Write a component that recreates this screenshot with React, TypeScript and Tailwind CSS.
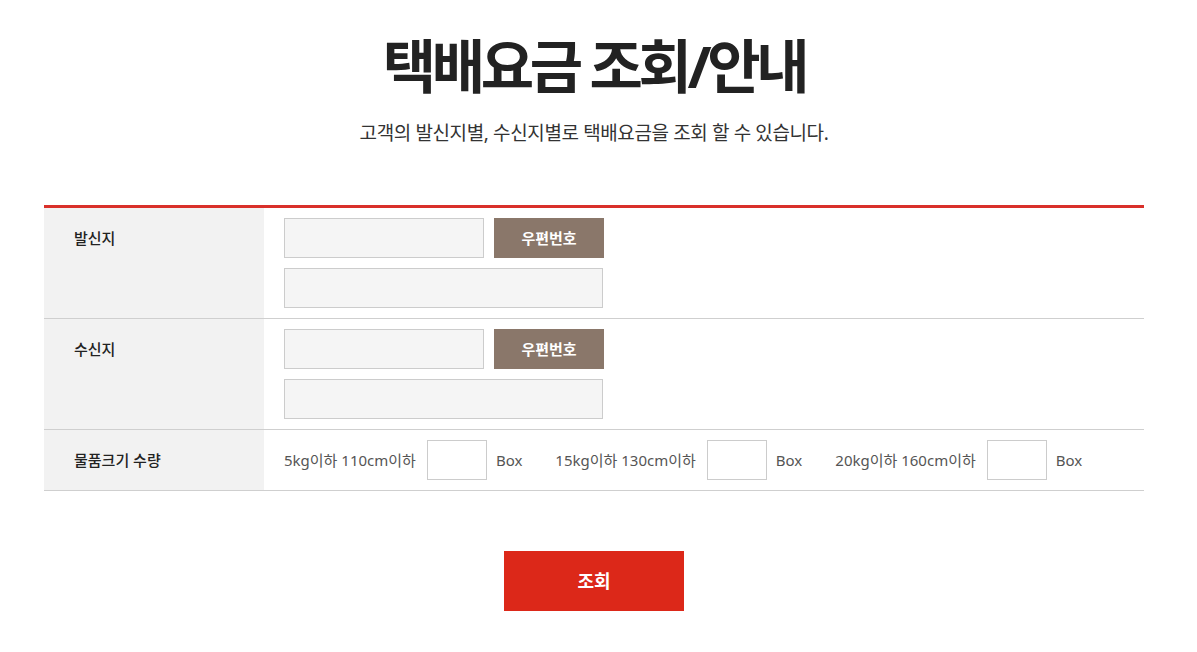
const font = {
  fontFamily: '"Noto Sans", "Noto Sans CJK KR", sans-serif',
}

function AddressRow({ label }: { label: string }) {
  return (
    <div className="flex border-b border-[#cfcfcf]">
      <div className="w-[220px] shrink-0 bg-[#f2f2f2] px-[30px] py-[10px] text-[15px] font-medium leading-[40px] text-[#222]">
        {label}
      </div>
      <div className="flex flex-col gap-[10px] px-[20px] py-[10px]">
        <div className="flex gap-[10px]">
          <input className="h-[40px] w-[200px] border border-[#cccccc] bg-[#f5f5f5] outline-none" />
          <button className="h-[40px] w-[110px] bg-[#8a776a] text-[15px] font-bold text-white">
            우편번호
          </button>
        </div>
        <input className="h-[40px] w-[319px] border border-[#cccccc] bg-[#f5f5f5] outline-none" />
      </div>
    </div>
  )
}

const sizes = ["5kg이하 110cm이하", "15kg이하 130cm이하", "20kg이하 160cm이하"]

export default function App() {
  return (
    <div className="min-h-[652px] bg-white text-[#222]" style={font}>
      <div className="ml-[44px] w-[1100px]">
        <div className="flex flex-col items-center pt-[26px]">
          <h1 className="text-[58px] font-bold leading-[80px] tracking-[-0.075em] text-[#222]">
            택배요금 조회/안내
          </h1>
          <p className="mt-[13px] text-[19px] leading-[28px] tracking-[-0.02em] text-[#333]">
            고객의 발신지별, 수신지별로 택배요금을 조회 할 수 있습니다.
          </p>
        </div>

        <div className="mt-[58px] border-t-[3px] border-[#d9302a]">
          <AddressRow label="발신지" />
          <AddressRow label="수신지" />
          <div className="flex border-b border-[#cfcfcf]">
            <div className="w-[220px] shrink-0 bg-[#f2f2f2] px-[30px] py-[10px] text-[15px] font-medium leading-[40px] text-[#222]">
              물품크기 수량
            </div>
            <div className="flex items-center gap-[33px] px-[20px] py-[10px]">
              {sizes.map((s) => (
                <div key={s} className="flex items-center text-[15px] text-[#555]">
                  <span>{s}</span>
                  <input className="ml-[11px] h-[40px] w-[60px] border border-[#cccccc] bg-white outline-none" />
                  <span className="ml-[9px]">Box</span>
                </div>
              ))}
            </div>
          </div>
        </div>

        <div className="mt-[60px] flex justify-center">
          <button className="h-[60px] w-[180px] bg-[#dc2819] text-[18px] font-bold text-white">
            조회
          </button>
        </div>
      </div>
    </div>
  )
}
